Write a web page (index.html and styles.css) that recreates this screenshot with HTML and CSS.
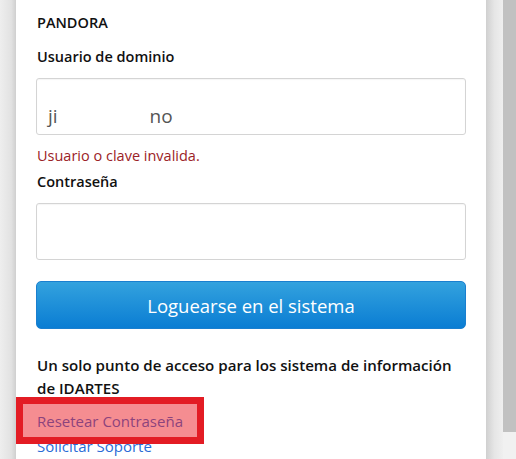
FILE: index.html
```html
<!DOCTYPE html>
<html lang="es">
<head>
<meta charset="utf-8">
<title>PANDORA</title>
<link rel="stylesheet" href="styles.css">
</head>
<body>
<div class="page">
  <div class="gutter-left"></div>
  <main class="card">
    <div class="brand">PANDORA</div>
    <form class="form">
      <label class="label">Usuario de dominio</label>
      <div class="input input-user"><span>ji</span><span class="gap"></span><span>no</span></div>
      <div class="error">Usuario o clave invalida.</div>
      <label class="label label-pass">Contraseña</label>
      <div class="input input-pass"></div>
      <button type="button" class="btn">Loguearse en el sistema</button>
    </form>
    <p class="info">Un solo punto de acceso para los sistema de información de IDARTES</p>
    <div class="links">
      <a class="link link-reset">Resetear Contraseña</a>
      <a class="link link-support">Solicitar Soporte</a>
      <div class="highlight"></div>
    </div>
  </main>
  <div class="gutter-right"></div>
  <div class="scrollbar"><div class="thumb"></div></div>
</div>
</body>
</html>
```
FILE: styles.css
```css
html, body {
  margin: 0;
  padding: 0;
  height: 459px;
  overflow: hidden;
  background: #fff;
}
body {
  font-family: "Open Sans", "Noto Sans", sans-serif;
  color: #1a1a1a;
}
.page {
  display: flex;
  height: 459px;
}
.gutter-left {
  width: 16px;
  background: linear-gradient(to right, #eeeeee, #e2e2e2 70%, #cfcfcf);
}
.card {
  width: 430px;
  padding: 0 20px;
  background: #fff;
  display: flex;
  flex-direction: column;
}
.gutter-right {
  width: 17px;
  background: linear-gradient(to right, #d0d0d0, #e6e6e6 50%, #efefef);
}
.scrollbar {
  width: 13px;
  background: #f1f1f1;
}
.thumb {
  height: 432px;
  background: #c1c1c1;
}
.brand {
  margin-top: 13px;
  margin-left: 1px;
  font-size: 14.5px;
  line-height: 20px;
  font-weight: 600;
  color: #111;
}
.form {
  display: flex;
  flex-direction: column;
}
.label {
  margin-top: 14px;
  margin-left: 1px;
  font-size: 14.5px;
  line-height: 20px;
  font-weight: 600;
  color: #111;
}
.input {
  box-sizing: border-box;
  height: 57px;
  margin-top: 11px;
  border: 1px solid #d4d4d4;
  border-radius: 3px;
  box-shadow: inset 0 1px 1px rgba(0,0,0,0.04);
  display: flex;
  align-items: flex-end;
  padding: 0 0 5px 11px;
  font-size: 19px;
  line-height: 26px;
  color: #555;
}
.gap {
  width: 92px;
}
.error {
  margin-top: 11px;
  margin-left: 1px;
  font-size: 14.5px;
  line-height: 20px;
  color: #9b2226;
}
.label-pass {
  margin-top: 6px;
}
.input-pass {
  margin-top: 11px;
}
.btn {
  margin-top: 21px;
  height: 48px;
  border: 1px solid #1a7fcf;
  border-radius: 5px;
  background: linear-gradient(to bottom, #33a2de, #0a7dd3);
  color: #fff;
  font-family: "Open Sans", "Noto Sans", sans-serif;
  font-size: 18.5px;
  padding: 0;
}
.info {
  margin: 25px 0 0 1px;
  max-width: 420px;
  font-size: 15.1px;
  line-height: 23px;
  font-weight: 600;
  color: #111;
}
.links {
  position: relative;
  display: flex;
  flex-direction: column;
  margin-top: 9px;
  margin-left: 1px;
}
.link {
  font-size: 15px;
  line-height: 25px;
  color: #2a6cd6;
}
.highlight {
  position: absolute;
  left: -21px;
  top: -12px;
  width: 174px;
  height: 33px;
  border: 7px solid #e31c24;
  background: rgba(236, 28, 36, 0.5);
}
```
